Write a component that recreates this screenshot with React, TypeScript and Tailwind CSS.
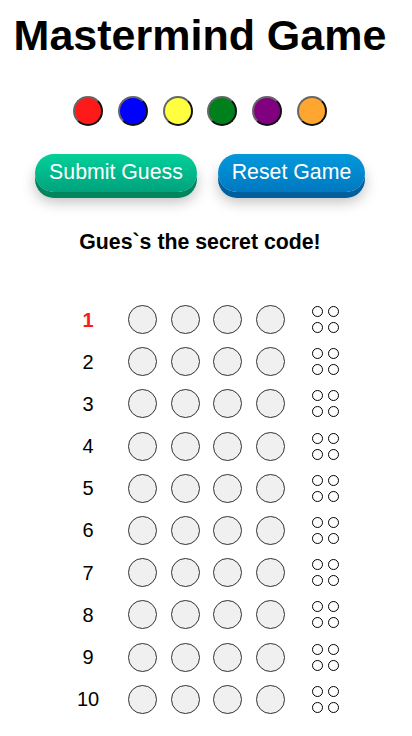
const PALETTE = ["#ff1a1a", "#0000ff", "#ffff40", "#00801c", "#800080", "#ffa630"];

const ROWS = Array.from({ length: 10 }, (_, i) => i + 1);

function Peg({ color }: { color: string }) {
  return (
    <div
      className="h-[30px] w-[30px] rounded-full border-2 border-t-[#666] border-l-[#666] border-r-[#111] border-b-[#111]"
      style={{ backgroundColor: color }}
    />
  );
}

function GuessRow({ n, active }: { n: number; active: boolean }) {
  return (
    <div className="flex h-[29px] items-center">
      <div
        className={
          active
            ? "w-[40px] text-center text-[20px] font-bold text-[#ff1a1a]"
            : "w-[40px] text-center text-[20px] text-black"
        }
      >
        {n}
      </div>
      <div className="ml-[20px] flex gap-[13.6px]">
        {[0, 1, 2, 3].map((k) => (
          <div key={k} className="h-[29px] w-[29px] rounded-full border border-[#333] bg-[#f0f0f0]" />
        ))}
      </div>
      <div className="ml-[27px] grid grid-cols-2 gap-[5px]">
        {[0, 1, 2, 3].map((k) => (
          <div key={k} className="h-[11px] w-[11px] rounded-full border border-black bg-white" />
        ))}
      </div>
    </div>
  );
}

export default function App() {
  return (
    <div className="min-h-[736px] w-[412px] bg-white font-['Liberation_Sans',Arial,sans-serif] text-black">
      <div className="flex w-[400px] flex-col items-center pt-[11px]">
        <h1 className="text-[43px] font-bold leading-[48px]">Mastermind Game</h1>

        <div className="mt-[37px] flex gap-[14.8px]">
          {PALETTE.map((c) => (
            <Peg key={c} color={c} />
          ))}
        </div>

        <div className="mt-[28px] flex gap-[21px]">
          <button className="h-[38px] w-[162px] rounded-full bg-[linear-gradient(#03d09b,#00a27c)] text-[21.3px] leading-none text-white shadow-[0_6px_0_#00855f,0_10px_14px_rgba(0,0,0,0.25)]">
            Submit Guess
          </button>
          <button className="h-[38px] w-[147px] rounded-full bg-[linear-gradient(#0399dc,#0078c0)] text-[21.3px] leading-none text-white shadow-[0_6px_0_#005f9c,0_10px_14px_rgba(0,0,0,0.25)]">
            Reset Game
          </button>
        </div>

        <p className="mt-[38px] text-[21.3px] font-bold leading-[24px]">Gues`s the secret code!</p>
      </div>

      <div className="mt-[51px] flex flex-col gap-[13.2px] pl-[68px]">
        {ROWS.map((n) => (
          <GuessRow key={n} n={n} active={n === 1} />
        ))}
      </div>
    </div>
  );
}
